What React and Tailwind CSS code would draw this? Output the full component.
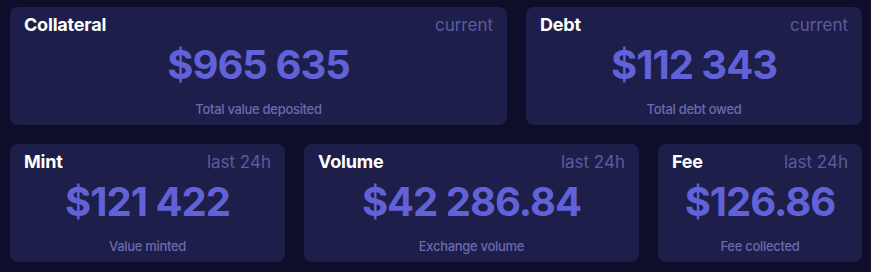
import React from "react";

function Card({ title, period, value, sub, w }) {
  return (
    <div className={`${w} h-[118px] rounded-[8px] bg-[#1e1e4a] px-[14px] pt-[7px] flex flex-col`}>
      <div className="flex justify-between items-center h-[22px]">
        <span className="text-[18px] font-bold text-white leading-none tracking-[-0.2px]">{title}</span>
        <span className="text-[17px] text-[#5b5b9f] leading-none">{period}</span>
      </div>
      <div className="mt-[5px] h-[48px] flex items-center justify-center text-[40px] font-bold text-[#6262d8] leading-none tracking-[-1px]">
        {value}
      </div>
      <div className="mt-[11px] h-[18px] flex items-center justify-center text-[13px] font-medium text-[#6a6aad] leading-none tracking-[-0.3px]">
        {sub}
      </div>
    </div>
  );
}

export default function App() {
  return (
    <div
      className="w-[871px] h-[272px] bg-[#0e0e2b] pt-[7px] pl-[10px] flex flex-col gap-[19px]"
      style={{ fontFamily: "Inter, 'Noto Sans', sans-serif" }}
    >
      <div className="flex gap-[19px]">
        <Card w="w-[497px]" title="Collateral" period="current" value="$965 635" sub="Total value deposited" />
        <Card w="w-[336px]" title="Debt" period="current" value="$112 343" sub="Total debt owed" />
      </div>
      <div className="flex gap-[19px]">
        <Card w="w-[275px]" title="Mint" period="last 24h" value="$121 422" sub="Value minted" />
        <Card w="w-[335px]" title="Volume" period="last 24h" value="$42 286.84" sub="Exchange volume" />
        <Card w="w-[204px]" title="Fee" period="last 24h" value="$126.86" sub="Fee collected" />
      </div>
    </div>
  );
}
